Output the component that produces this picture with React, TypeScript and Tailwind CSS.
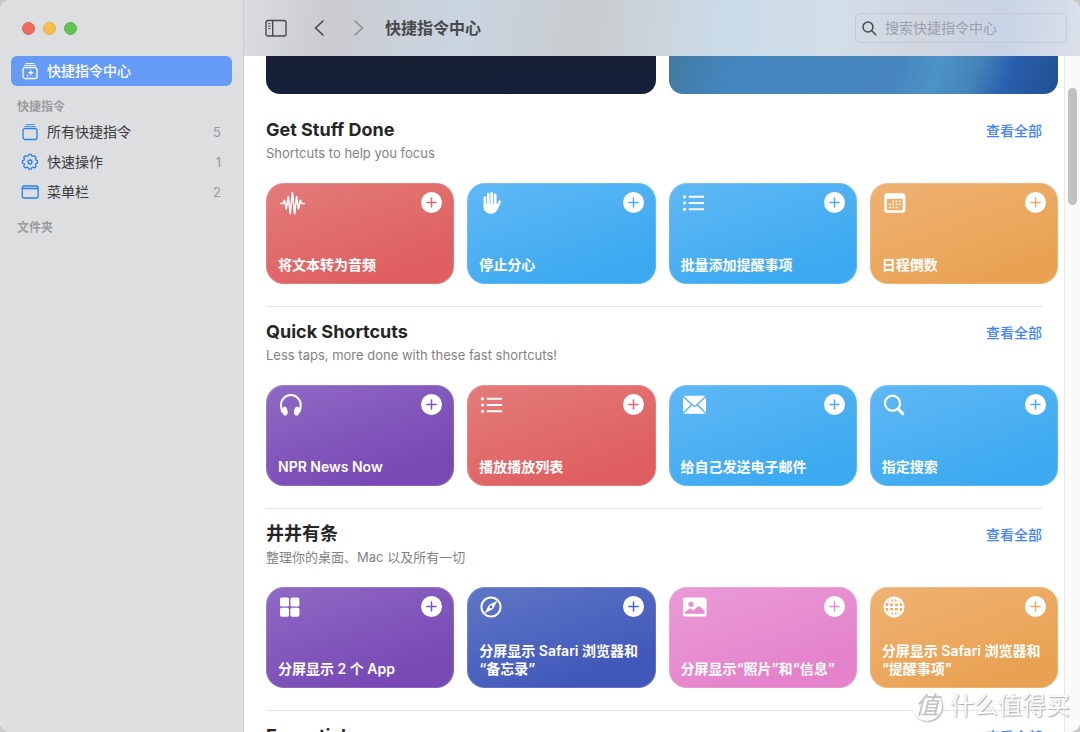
import React from 'react';

interface Shortcut {
  title: string;
  icon: React.ReactNode;
  color: keyof typeof cardColors;
}

interface Section {
  title: string;
  subtitle: string;
  shortcuts: Shortcut[];
}

// The text colour is what the plus sign and the icon cut-outs are drawn in
const cardColors = {
  red: 'from-[#e47b7b] to-[#df5f60] text-[#e06768]',
  blue: 'from-[#5fb8f4] to-[#3caaf1] text-[#4aaff2]',
  orange: 'from-[#efb273] to-[#e9a252] text-[#ebab63]',
  purple: 'from-[#9069c5] to-[#7849b4] text-[#8054ba]',
  indigo: 'from-[#6076c6] to-[#4158ba] text-[#4b62bf]',
  pink: 'from-[#ea9bd6] to-[#e482cb] text-[#e78dd0]',
};

const waveIcon = (
  <path
    d="M2.5 11.5H5l1.4-3.2 1.9 8.5 2-12.3 1.9 17.3L14.4.6l2.2 21.2 1.9-17.3 2 12.3 1.9-8.5 1.4 3.2h2.5"
    fill="none" stroke="white" strokeWidth="1.6" strokeLinecap="round" strokeLinejoin="round"
  />
);

const handIcon = (
  <g fill="none" stroke="white" strokeLinecap="round" strokeLinejoin="round">
    <path d="M5.9 5.5V14M9.3 2v11M12.8 1.3V13M16.2 2.8V14" strokeWidth="2.7" />
    <path d="M20.8 9.6l-3 6.6" strokeWidth="2.5" />
    <path d="M4.6 12h13.1l1.6 3.2c-1.2 4-3.3 6.5-6.8 6.5-5 0-7.9-2.7-7.9-7z" fill="white" stroke="none" />
  </g>
);

const listIcon = (
  <g stroke="white" strokeLinecap="round">
    <path d="M8.5 4.8h13.8M8.5 11h13.8M8.5 17.3h13.8" strokeWidth="2" />
    <path d="M3.5 4.8h.01M3.5 11h.01M3.5 17.3h.01" strokeWidth="3.2" />
  </g>
);

const calendarIcon = (
  <g fill="white">
    <path fillRule="evenodd" d="M5 1.3h15.6a2.7 2.7 0 0 1 2.7 2.7v14a2.7 2.7 0 0 1-2.7 2.7H5A2.7 2.7 0 0 1 2.3 18V4A2.7 2.7 0 0 1 5 1.3zM5.9 6.7a1 1 0 0 0-1 1v9.6a1 1 0 0 0 1 1h13.8a1 1 0 0 0 1-1V7.7a1 1 0 0 0-1-1z" />
    <path d="M11.2 9.4h.01M14.5 9.4h.01M17.7 9.4h.01M8 12.4h.01M11.2 12.4h.01M14.5 12.4h.01M17.7 12.4h.01M8 15.5h.01M11.2 15.5h.01M14.5 15.5h.01" stroke="white" strokeWidth="1.8" strokeLinecap="round" />
  </g>
);

const headphonesIcon = (
  <g fill="none" stroke="white">
    <path d="M4.6 18.5C3.5 16.4 3 13.5 3 11a9.8 9.9 0 0 1 19.7 0c0 2.5-.5 5.4-1.6 7.500" strokeWidth="2" />
    <ellipse cx="6.9" cy="17.2" rx="2.7" ry="4.4" fill="white" stroke="none" transform="rotate(-10 6.9 17.2)" />
    <ellipse cx="18.8" cy="17.2" rx="2.7" ry="4.4" fill="white" stroke="none" transform="rotate(10 18.8 17.2)" />
  </g>
);

const mailIcon = (
  <g>
    <rect x="2" y="1.8" width="23" height="18" rx="1.6" fill="white" />
    <path d="M2 2.3l9.8 9.2q1.7 1.4 3.4 0L25 2.3M2.3 19.4l8.2-8.6M24.7 19.4l-8.2-8.6" fill="none" stroke="currentColor" strokeWidth="1.3" />
  </g>
);

const searchIcon = (
  <g fill="none" stroke="white" strokeLinecap="round">
    <circle cx="10.5" cy="9.2" r="7.5" strokeWidth="2.2" />
    <path d="M16.3 15.1l4.6 4.7" strokeWidth="3" />
  </g>
);

const gridIcon = (
  <g fill="white">
    <rect x="2" y="1.5" width="9" height="9" rx="1.6" />
    <rect x="12.4" y="1.5" width="9" height="9" rx="1.6" />
    <rect x="2" y="11.7" width="9" height="9" rx="1.6" />
    <rect x="12.4" y="11.7" width="9" height="9" rx="1.6" />
  </g>
);

const compassIcon = (
  <g>
    <circle cx="12" cy="11" r="9.6" fill="none" stroke="white" strokeWidth="2" />
    <path d="M17.6 5.4l-3.8 7.4-7.4 3.8 3.8-7.4z" fill="white" stroke="white" strokeWidth=".8" strokeLinejoin="round" />
    <circle cx="12" cy="11" r="1.4" fill="currentColor" />
  </g>
);

const photoIcon = (
  <g>
    <rect x="2" y="1.5" width="23.6" height="19" rx="2.6" fill="white" />
    <circle cx="10" cy="8.3" r="2.6" fill="currentColor" />
    <path d="M4 17.7v-1.5l4.2-3.5q.9-.6 1.8 0l2.2 1.9 4.7-4q1-.8 2 0l4.7 4.6v1.6q0 .9-.9.9z" fill="currentColor" />
  </g>
);

const globeIcon = (
  <g fill="none" stroke="white" strokeWidth="1.9">
    <circle cx="12" cy="11" r="9.6" />
    <ellipse cx="12" cy="11" rx="5" ry="9.6" />
    <path d="M12 1.2v19.6M2.2 11h19.6M3.9 5.6q8.1 2.2 16.2 0M3.9 16.4q8.1-2.2 16.2 0" />
  </g>
);

const sections: Section[] = [
  {
    title: 'Get Stuff Done',
    subtitle: 'Shortcuts to help you focus',
    shortcuts: [
      { title: '将文本转为音频', icon: waveIcon, color: 'red' },
      { title: '停止分心', icon: handIcon, color: 'blue' },
      { title: '批量添加提醒事项', icon: listIcon, color: 'blue' },
      { title: '日程倒数', icon: calendarIcon, color: 'orange' },
    ],
  },
  {
    title: 'Quick Shortcuts',
    subtitle: 'Less taps, more done with these fast shortcuts!',
    shortcuts: [
      { title: 'NPR News Now', icon: headphonesIcon, color: 'purple' },
      { title: '播放播放列表', icon: listIcon, color: 'red' },
      { title: '给自己发送电子邮件', icon: mailIcon, color: 'blue' },
      { title: '指定搜索', icon: searchIcon, color: 'blue' },
    ],
  },
  {
    title: '井井有条',
    subtitle: '整理你的桌面、Mac 以及所有一切',
    shortcuts: [
      { title: '分屏显示 2 个 App', icon: gridIcon, color: 'purple' },
      { title: '分屏显示 Safari 浏览器和\n“备忘录”', icon: compassIcon, color: 'indigo' },
      { title: '分屏显示“照片”和“信息”', icon: photoIcon, color: 'pink' },
      { title: '分屏显示 Safari 浏览器和\n“提醒事项”', icon: globeIcon, color: 'orange' },
    ],
  },
  { title: 'Essentials', subtitle: '', shortcuts: [] },
];

const stackIcon = (
  <>
    <path d="M5 1.6h8M3.5 3.7h11" strokeOpacity=".7" />
    <rect x="2" y="5.7" width="14" height="10.8" rx="2" />
  </>
);

const galleryIcon = (
  <>
    <path d="M5 1.6h8M3.5 3.7h11" strokeWidth="1" />
    <rect x="2" y="5.7" width="14" height="10.8" rx="2" />
    <path d="M9.8 8l.7 2.1 2.1.7-2.1.7-.7 2.1-.7-2.1-2.1-.7 2.1-.7z" fill="currentColor" strokeWidth=".3" />
    <path d="M6.5 13.5h.01" strokeWidth="1.6" />
  </>
);

const gearIcon = (
  <>
    <path d="M7.7 1.600h2.600l.6 1.700 1.100.5 1.700-.8 1.800 1.800-.8 1.700.5 1.100 1.600.5v2.600l-1.600.5-.5 1.100.8 1.700-1.800 1.800-1.700-.8-1.100.5-.6 1.600H7.700l-.6-1.600-1.100-.5-1.700.8-1.800-1.800.8-1.700-.5-1.100-1.600-.5V8.100l1.600-.5.5-1.100-.8-1.700 1.800-1.800 1.700.8 1.100-.5z" transform="translate(.3 -.2) scale(.96)" />
    <circle cx="9" cy="9" r="2" />
  </>
);

const menuBarIcon = (
  <>
    <rect x="1.3" y="3" width="15.8" height="12" rx="1.6" />
    <path d="M1.5 5.5h15.4" />
  </>
);

const navItems = [
  { label: '所有快捷指令', count: 5, icon: stackIcon },
  { label: '快速操作', count: 1, icon: gearIcon },
  { label: '菜单栏', count: 2, icon: menuBarIcon },
];

const NavIcon: React.FC<{ children: React.ReactNode }> = ({ children }) => (
  <svg width="18" height="18" viewBox="0 0 18 18" fill="none" stroke="currentColor" strokeWidth="1.3" strokeLinecap="round" strokeLinejoin="round" aria-hidden="true">
    {children}
  </svg>
);

const Sidebar: React.FC = () => (
  <aside className="flex w-[244px] shrink-0 flex-col border-r border-[#cbccce] bg-[#dddee0] px-[11px]">
    <div className="flex h-14 items-center gap-2 pl-[11px]">
      <button aria-label="关闭" className="size-[13px] rounded-full border border-[#dd6255] bg-[#ed6a5e]" />
      <button aria-label="最小化" className="size-[13px] rounded-full border border-[#e0b04a] bg-[#f5bf4f]" />
      <button aria-label="缩放" className="size-[13px] rounded-full border border-[#58b449] bg-[#61c554]" />
    </div>
    <nav>
      <a href="#gallery" className="flex h-[30px] items-center gap-2 rounded-md bg-[#659bf7] pl-2.5 text-sm font-medium text-white">
        <NavIcon>{galleryIcon}</NavIcon>
        快捷指令中心
      </a>
      <h2 className="mt-2.5 h-[21px] pl-1.5 text-xs leading-[21px] font-semibold text-[#9b9c9e]">快捷指令</h2>
      {navItems.map((item) => (
        <a key={item.label} href="#list" className="flex h-[30px] items-center gap-2 pr-[11px] pl-2.5 text-sm text-[#3a3b3c]">
          <span className="text-[#2680f0]">
            <NavIcon>{item.icon}</NavIcon>
          </span>
          <span className="flex-1">{item.label}</span>
          <span className="text-[13px] text-[#98999b]">{item.count}</span>
        </a>
      ))}
      <h2 className="mt-2.5 h-[21px] pl-1.5 text-xs leading-[21px] font-semibold text-[#9b9c9e]">文件夹</h2>
    </nav>
  </aside>
);

const Toolbar: React.FC = () => (
  <header className="flex h-14 shrink-0 items-center bg-[linear-gradient(95deg,#dadde0_0%,#cccbcf_10%,#c9d5e1_26%,#c9cccd_41%,#ccd5dd_50%,#cadae7_57%,#d2dfe9_70%,#d0d5e0_81%,#c9d4e7_91%,#dbe0ea_100%)] pr-[13px] pl-[21px] text-[#48494b]">
    <button aria-label="切换边栏">
      <svg width="22" height="18" viewBox="0 0 22 18" fill="none" stroke="currentColor" strokeWidth="1.4" strokeLinecap="round">
        <rect x="1" y="1.5" width="20" height="15.5" rx="2" />
        <path d="M7.7 1.5V17" />
        <path d="M3.6 4.7h1.6M3.6 7.2h1.6M3.6 9.7h1.6" strokeWidth="1" />
      </svg>
    </button>
    <button aria-label="后退" className="ml-[26px]">
      <svg width="12" height="18" viewBox="0 0 12 18" fill="none" stroke="currentColor" strokeWidth="1.7" strokeLinecap="round" strokeLinejoin="round">
        <path d="M10 2L2.500 9l7.500 7" />
      </svg>
    </button>
    <button aria-label="前进" className="ml-7 text-[#8e9093]">
      <svg width="12" height="18" viewBox="0 0 12 18" fill="none" stroke="currentColor" strokeWidth="1.7" strokeLinecap="round" strokeLinejoin="round">
        <path d="M2 2l7.500 7L2 16" />
      </svg>
    </button>
    <h1 className="ml-5 flex-1 text-base font-bold">快捷指令中心</h1>
    <label className="flex h-[30px] w-[212px] items-center gap-2 rounded-md border border-[#c3c9d5] px-1.5">
      <svg width="15" height="15" viewBox="0 0 15 15" fill="none" stroke="currentColor" strokeWidth="1.5" strokeLinecap="round" aria-hidden="true">
        <circle cx="6" cy="6" r="5" />
        <path d="M9.8 9.8l4 4" />
      </svg>
      <input type="search" aria-label="搜索" placeholder="搜索快捷指令中心" className="min-w-0 flex-1 bg-transparent text-sm outline-none placeholder:text-[#9a9fa9]" />
    </label>
  </header>
);

const ShortcutCard: React.FC<{ shortcut: Shortcut }> = ({ shortcut }) => (
  <article className={`flex h-[101px] flex-col justify-between rounded-[18px] bg-linear-160 to-80% px-3 pt-[9px] pb-2.5 inset-ring inset-ring-white/15 ${cardColors[shortcut.color]}`}>
    <div className="flex items-start justify-between">
      <svg width="28" height="24" viewBox="0 0 28 24" aria-hidden="true">{shortcut.icon}</svg>
      <button aria-label={`添加${shortcut.title}`} className="flex size-[21px] items-center justify-center rounded-full bg-white">
        <svg width="11" height="11" viewBox="0 0 11 11" stroke="currentColor" strokeWidth="1.5" strokeLinecap="round">
          <path d="M5.5.9v9.2M.9 5.5h9.2" />
        </svg>
      </button>
    </div>
    <h3 className="-mr-2 text-sm leading-[18px] font-semibold whitespace-pre-line text-white">{shortcut.title}</h3>
  </article>
);

const ShortcutSection: React.FC<{ section: Section }> = ({ section }) => (
  <section>
    <div className="mr-4 mb-5 flex justify-between border-t border-[#e3e3e3] pt-3">
      <div>
        <h2 className="h-[26px] text-lg leading-[26px] font-bold text-[#262626]">{section.title}</h2>
        <p className="h-5 text-[13px] leading-5 text-[#828282]">{section.subtitle}</p>
      </div>
      <a href="#all" className="h-[26px] text-sm leading-7 font-medium text-[#4384f7]">查看全部</a>
    </div>
    <div className="mb-[22px] grid grid-cols-4 gap-[13px]">
      {section.shortcuts.map((shortcut) => (
        <ShortcutCard key={shortcut.title} shortcut={shortcut} />
      ))}
    </div>
  </section>
);

const Watermark: React.FC = () => (
  <div className="pointer-events-none absolute right-2.5 bottom-2.5 flex items-center gap-2 text-2xl leading-8 text-white [text-shadow:1px_1px_1px_#aaa,0_0_1px_#bbb]">
    <span className="flex size-[30px] items-center justify-center rounded-full bg-white text-[#c0c0c0] italic shadow-[1px_1px_2px_#aaa] [text-shadow:none]">
      值
    </span>
    什么值得买
  </div>
);

export default function App() {
  return (
    <div className="h-screen bg-[#c8c9ca] font-[Inter,'Noto_Sans_CJK_SC',sans-serif]">
      <div className="relative flex h-full overflow-hidden rounded-[10px] bg-white">
        <Sidebar />
        <main className="flex min-w-0 flex-1 flex-col">
          <Toolbar />
          <div className="flex min-h-0 flex-1">
            <div className="min-w-0 flex-1 overflow-hidden pr-1.5 pl-[22px]">
              <div className="mb-2.5 grid grid-cols-2 gap-[13px]">
                <div className="h-[38px] rounded-b-[14px] bg-linear-to-b from-[#172033] to-[#15203c]" />
                <div className="h-[38px] rounded-b-[14px] bg-[linear-gradient(110deg,#447aa0_0%,#4385bd_16%,#4786bf_58%,#4c93c6_68%,#4585b9_77%,#2a5fae_86%,#20508e_100%)]" />
              </div>
              <div className="[&>section:first-child>div]:border-transparent">
                {sections.map((section) => (
                  <ShortcutSection key={section.title} section={section} />
                ))}
              </div>
            </div>
            <div className="w-4 shrink-0 border-l border-[#e8e8e8] bg-[#fafafa] pt-8 pl-[3px]">
              <div className="h-[117px] w-[9px] rounded-full bg-[#c1c1c1]" />
            </div>
          </div>
        </main>
        <Watermark />
      </div>
    </div>
  );
}
